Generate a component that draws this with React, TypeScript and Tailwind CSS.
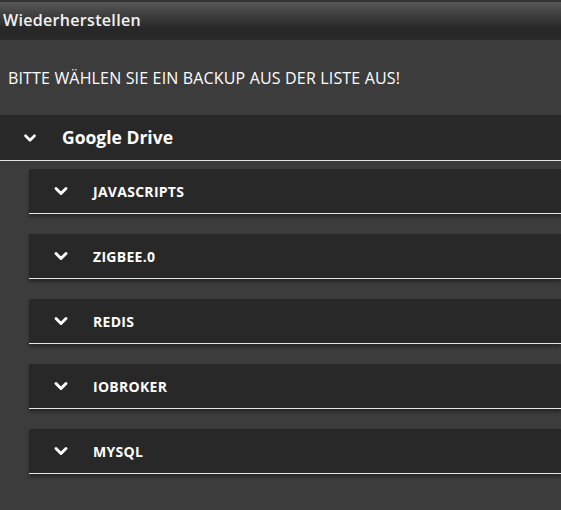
import { ChevronDown } from "lucide-react";

const backups = ["JAVASCRIPTS", "ZIGBEE.0", "REDIS", "IOBROKER", "MYSQL"];

function Chevron({ size }: { size: number }) {
  return <ChevronDown size={size} strokeWidth={3.5} color="white" />;
}

export default function App() {
  return (
    <div
      className="w-[561px] h-[510px] overflow-hidden bg-[#3c3c3c] text-white"
      style={{ fontFamily: '"Open Sans", "Noto Sans", sans-serif' }}
    >
      <div className="h-[40px] border-t-2 border-[#333] bg-gradient-to-b from-[#585858] via-[#272727] via-70% to-[#2a2a2a] flex items-center px-[3px]">
        <span className="text-[16px] font-semibold tracking-[0.02em] text-[#f2f2f2] -mt-[3px]">
          Wiederherstellen
        </span>
      </div>

      <div className="h-[75px] flex items-center px-[8px]">
        <p className="text-[16px] tracking-[0.01em] text-white">
          BITTE WÄHLEN SIE EIN BACKUP AUS DER LISTE AUS!
        </p>
      </div>

      <div className="h-[46px] bg-[#282828] border-b border-[#e6e6e6] flex items-center">
        <div className="w-[62px] flex justify-center pr-[3px]">
          <Chevron size={18} />
        </div>
        <span className="text-[17.5px] font-bold">Google Drive</span>
      </div>

      <div className="flex flex-col gap-[20px] pl-[29px] pt-[8px]">
        {backups.map((name) => (
          <div
            key={name}
            className="h-[45px] bg-[#282828] border-b border-[#e6e6e6] flex items-center shadow-[0_3px_3px_rgba(0,0,0,0.35)]"
          >
            <div className="w-[64px] flex justify-center">
              <Chevron size={20} />
            </div>
            <span className="text-[14px] font-bold tracking-[0.02em]">{name}</span>
          </div>
        ))}
      </div>
    </div>
  );
}
